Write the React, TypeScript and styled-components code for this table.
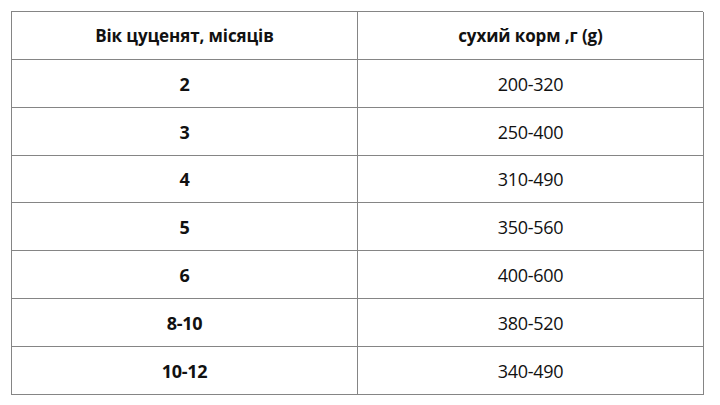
import { Fragment } from 'react';
import styled, { createGlobalStyle } from 'styled-components';

const GlobalStyle = createGlobalStyle`
  html, body {
    margin: 0;
    padding: 0;
    background: #ffffff;
  }
  body {
    font-family: 'Open Sans', 'Noto Sans', sans-serif;
    color: #000000;
  }
`;

const Page = styled.div`
  width: 720px;
  height: 405px;
  padding: 11px 0 0 11px;
  box-sizing: border-box;
`;

const Table = styled.div`
  width: 692px;
  display: grid;
  grid-template-columns: 346px 346px;
  grid-auto-rows: 47.85px;
  border-top: 1px solid #858585;
  border-left: 1px solid #858585;
  box-sizing: border-box;
`;

const Cell = styled.div<{ $bold?: boolean; $head?: boolean }>`
  display: flex;
  align-items: center;
  justify-content: center;
  border-right: 1px solid #858585;
  border-bottom: 1px solid #858585;
  box-sizing: border-box;
  font-size: ${({ $head }) => ($head ? '17px' : '18px')};
  font-weight: ${({ $bold }) => ($bold ? 700 : 400)};
  letter-spacing: ${({ $head }) => ($head ? '-0.1px' : '-0.3px')};
  color: #111111;
  padding-top: 1px;
`;

const rows: [string, string][] = [
  ['2', '200-320'],
  ['3', '250-400'],
  ['4', '310-490'],
  ['5', '350-560'],
  ['6', '400-600'],
  ['8-10', '380-520'],
  ['10-12', '340-490'],
];

const App = () => (
  <Page>
    <GlobalStyle />
    <Table>
      <Cell $bold $head>Вік цуценят, місяців</Cell>
      <Cell $bold $head>сухий корм ,г (g)</Cell>
      {rows.map(([age, food]) => (
        <Fragment key={age}>
          <Cell $bold>{age}</Cell>
          <Cell>{food}</Cell>
        </Fragment>
      ))}
    </Table>
  </Page>
);

export default App;
